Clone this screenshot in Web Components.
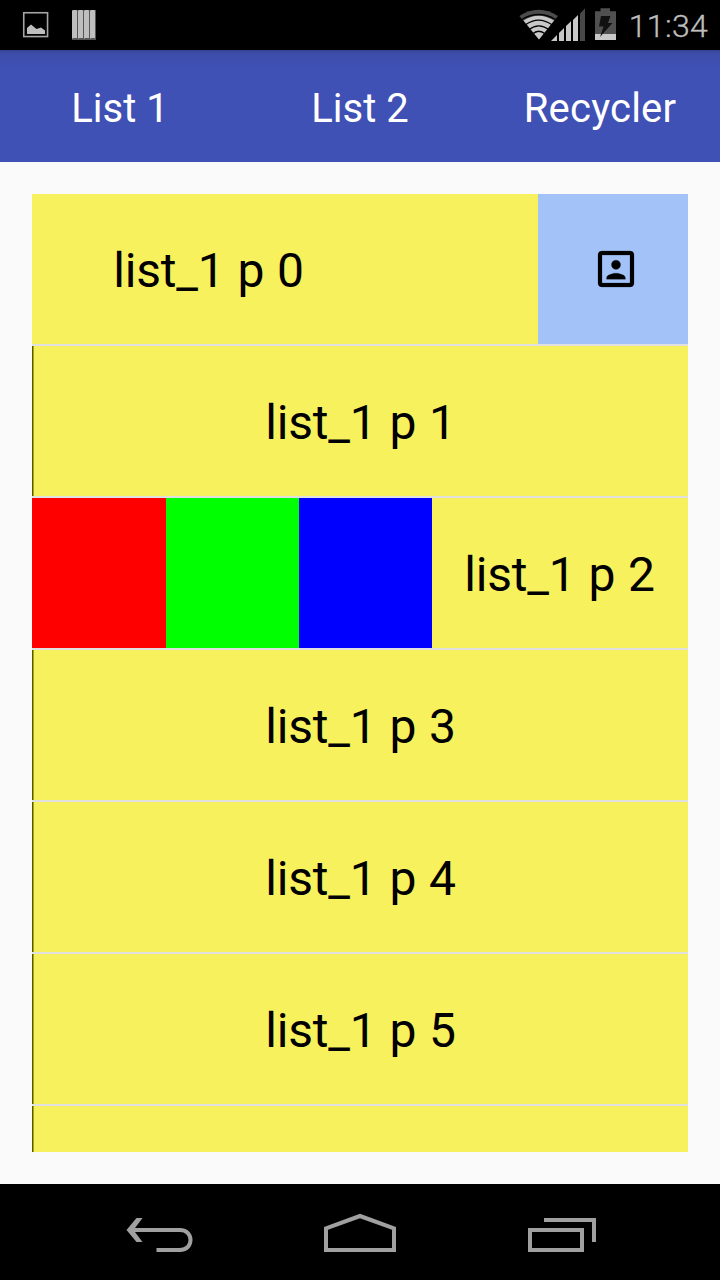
<!DOCTYPE html>
<html lang="en">
<head>
<meta charset="utf-8">
<title>Swipe lists</title>
<style>
body { margin: 0; background: #fafafa; font-family: Roboto, "Noto Sans", sans-serif; }
</style>
</head>
<body>
<app-screen></app-screen>
<script>
const define = (name, html) => {
  const template = document.createElement('template');
  template.innerHTML = html;
  customElements.define(name, class extends HTMLElement {
    constructor() {
      super();
      this.attachShadow({ mode: 'open' }).append(template.content.cloneNode(true));
    }
  });
};

define('status-bar', `
<style>
:host { display: flex; align-items: center; justify-content: space-between; height: 50px; background: #000; color: #bebebe; }
svg { display: block; }
.right { display: flex; align-items: center; padding-right: 12px; }
.clock { font-size: 32px; font-weight: 300; line-height: 50px; width: 79px; display: flex; justify-content: flex-end; white-space: nowrap; letter-spacing: .3px; -webkit-text-stroke: .35px #bebebe; padding-top: 1px; }
</style>
<svg width="120" height="50" viewBox="0 0 120 50">
  <rect x="23.75" y="12.75" width="23.8" height="23.8" fill="none" stroke="#a5a5a5" stroke-width="1.6"/>
  <path d="M27 34V28L31 24.5L36.5 29L41 27.5L45 30.5V34Z" fill="#bebebe"/>
  <g fill="#555"><path d="M72 10h6v30h-6z"/><path d="M78 10h6v30h-6z"/><path d="M84 10h6v30h-6z"/><path d="M90 10h6v30h-6z"/></g>
  <g fill="#bebebe"><path d="M72 11l1-1h3.500l.5 1v27h-4l-1 1z"/><path d="M78 11l1-1h3.500l.5 1v27h-4l-1 1z"/><path d="M84 11l1-1h3.500l.5 1v27h-4l-1 1z"/><path d="M90 11l1-1h3.500l.5 1v27h-4l-1 1z"/></g>
</svg>
<div class="right">
<svg width="110" height="50" viewBox="519 0 110 50">
  <path d="M519.300 16Q538.500 3.500 558 16L539 39.500Z" fill="#4c4c4c"/>
  <path d="M523.500 20.500Q538.500 11 554 20.500L539 39.500Z" fill="#c8c8c8"/>
  <g fill="none" stroke="#000" stroke-width="1.300"><path d="M522 19.500Q538.500 9.500 555.500 19.500"/><path d="M525.500 24.800Q538.500 15.500 552 24.800"/><path d="M529 29.500Q538.500 22.200 549 29.500"/><path d="M532.500 34Q538.500 28.500 545.500 34"/></g>
  <g fill="#c8c8c8"><path d="M551 41L557 35V41Z"/><path d="M559 33L564 28V41H559Z"/><path d="M566 26L571 21.300V41H566Z"/><path d="M573 20L578 15V41H573Z"/></g>
  <path d="M580 13.500L585 8.500V41H580Z" fill="#484848"/>
  <path d="M595 11.200H600.500V8.300H610V11.200H616V40H595Z" fill="#505050"/>
  <path d="M595 34H616V40H595Z" fill="#c8c8c8"/>
  <path d="M601 16H610.500L608 23H612.500L600 37L603.500 26.500H599Z" fill="#111"/>
</svg>
<div class="clock">11:34</div>
</div>`);

define('tab-bar', `
<style>
:host { display: grid; grid-template-columns: repeat(3, 1fr); height: 112px; background: linear-gradient(#343f88 0, #3b4ba4 2px, #3e4eae 8px, #3f51b5 18px); color: #fff; }
</style><slot></slot>`);

define('tab-item', `
<style>
:host { display: flex; align-items: center; justify-content: center; font-size: 40px; padding-top: 5px; letter-spacing: var(--tracking, 0); }
</style><slot></slot>`);

define('swipe-list', `
<style>
:host { display: flex; flex-direction: column; gap: 2px; height: 958px; margin: 32px; overflow: hidden; background: #e0e0e0; }
</style><slot></slot>`);

define('swipe-row', `
<style>
:host { display: flex; flex: 0 0 150px; overflow: hidden; background: #f7f15d; color: #000; }
.text { flex: 1; min-width: 0; display: flex; align-items: center; justify-content: center; font-size: 48px; white-space: nowrap; letter-spacing: -.15px; word-spacing: 1px; padding-top: 2px; margin: 0 1px 0 var(--shift, 0px); }
</style><slot name="start"></slot><div class="text"><slot></slot></div><slot name="end"></slot>`);

define('color-strip', `
<style>
:host { display: grid; grid-template-columns: 1px 1px; flex: none; }
:host([open]) { grid-template-columns: 134px 133px 133px; }
i { background: #f00; } i + i { background: #0f0; } i + i + i { background: #00f; }
:host(:not([open])) i:nth-of-type(3) { display: none; }
</style><i></i><i></i><i></i>`);

define('contact-action', `
<style>
:host { display: flex; flex: 0 0 150px; align-items: center; justify-content: center; background: #a2c2f8; }
svg { display: block; margin-left: 6px; }
</style>
<svg width="48" height="48" viewBox="0 0 24 24"><path d="M19 3H5a2 2 0 0 0-2 2v14a2 2 0 0 0 2 2h14a2 2 0 0 0 2-2V5a2 2 0 0 0-2-2zm0 16H5V5h14zM12 12.200c1.300 0 2.300-1 2.300-2.300S13.300 7.600 12 7.600 9.700 8.600 9.700 9.900 10.700 12.200 12 12.200zm4.700 4.900v-.7c0-1.500-3.100-2.300-4.700-2.300s-4.700.8-4.700 2.300v.7z" stroke="#000" stroke-opacity=".35" stroke-width=".3"/></svg>`);

define('nav-bar', `
<style>
:host { display: flex; justify-content: center; height: 96px; background: #000; }
svg { display: block; }
</style>
<svg width="720" height="96" viewBox="0 1184 720 96" fill="none" stroke="#a0a0a0" stroke-width="4">
  <path d="M131 1230H180C194 1230 194 1250 180 1250H156.500"/>
  <path d="M136.500 1218H142.500L133.500 1230L142.500 1242H136.500L126.500 1230Z" fill="#a0a0a0" stroke="none"/>
  <path d="M326 1250V1228.400L360 1216L394 1228.400V1250Z"/>
  <path d="M530 1230H582V1250H530ZM544 1220H594V1242"/>
</svg>`);

define('app-screen', `
<style>
:host { display: flex; flex-direction: column; width: 720px; height: 1280px; overflow: hidden; background: #fafafa; }
status-bar, tab-bar, swipe-list, nav-bar { flex-shrink: 0; }
.swiped-left { --shift: -152px; }
.wide { --tracking: .2px; }
</style>
<status-bar></status-bar>
<tab-bar><tab-item>List 1</tab-item><tab-item>List 2</tab-item><tab-item class="wide">Recycler</tab-item></tab-bar>
<swipe-list>
  <swipe-row class="swiped-left">list_1 p 0<contact-action slot="end"></contact-action></swipe-row>
  <swipe-row><color-strip slot="start"></color-strip>list_1 p 1</swipe-row>
  <swipe-row><color-strip slot="start" open></color-strip>list_1 p 2</swipe-row>
  <swipe-row><color-strip slot="start"></color-strip>list_1 p 3</swipe-row>
  <swipe-row><color-strip slot="start"></color-strip>list_1 p 4</swipe-row>
  <swipe-row><color-strip slot="start"></color-strip>list_1 p 5</swipe-row>
  <swipe-row><color-strip slot="start"></color-strip></swipe-row>
</swipe-list>
<nav-bar></nav-bar>
`);
</script>
</body>
</html>
